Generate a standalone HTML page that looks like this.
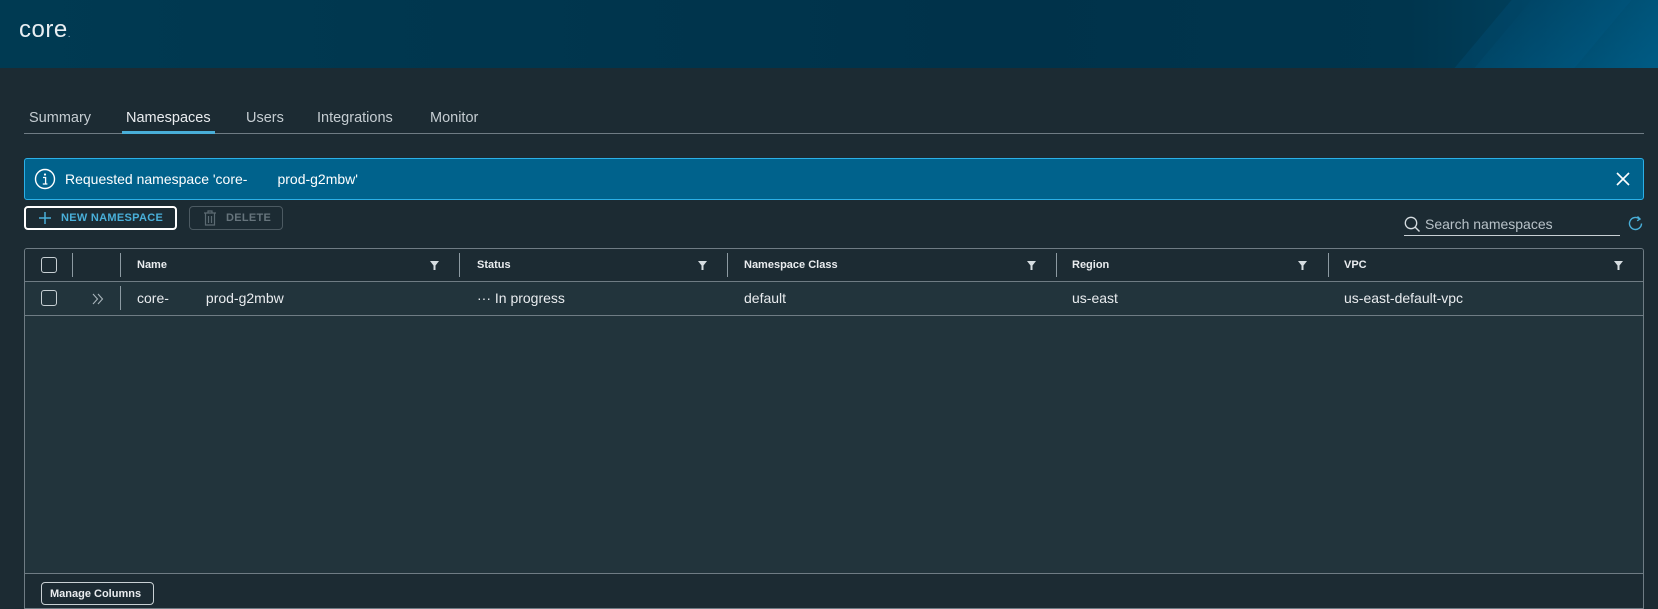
<!DOCTYPE html>
<html><head><meta charset="utf-8"><style>
*{box-sizing:border-box;margin:0;padding:0}
body{width:1658px;height:609px;overflow:hidden;background:#1c2b33;font-family:"Liberation Sans",sans-serif;color:#e9ecef;position:relative}
.hdr{position:absolute;left:0;top:0;width:1658px;height:68px;background:linear-gradient(90deg,#003a52 0%,#00324a 60%,#00354d 85%,#004a6b 100%);overflow:hidden}
.hdr .s1{position:absolute;right:-40px;top:-20px;width:200px;height:120px;background:linear-gradient(120deg,rgba(0,100,150,.0),rgba(0,110,160,.55));transform:skewX(-40deg)}
.hdr .s2{position:absolute;right:60px;top:-20px;width:120px;height:120px;background:rgba(0,80,120,.35);transform:skewX(-40deg)}
.logo{position:absolute;left:19px;top:16px;font-size:24px;color:#e8eef2;letter-spacing:.5px}
.logo span{font-size:10px;color:#8fb0c0}
.a{position:absolute}
.tab{position:absolute;top:110px;font-size:14.5px;color:#c5cdd2}
.t{font-size:14px}
.hd{position:absolute;top:259px;font-size:11px;font-weight:bold;color:#e9ecef}
.sep{position:absolute;top:253px;width:1px;height:24px;background:#8c9aa2}
.flt{position:absolute;top:261px}
.cb{position:absolute;width:16px;height:16px;border:1px solid #c8d0d4;border-radius:3px}
.cell{position:absolute;top:290px;font-size:14px;color:#e9ecef}
</style></head><body>
<div class="hdr"><div class="s2"></div><div class="s1"></div></div>
<div class="logo">core<span>.</span></div>

<div class="tab" style="left:29px">Summary</div>
<div class="tab" style="left:126px;color:#e9ecef">Namespaces</div>
<div class="tab" style="left:246px">Users</div>
<div class="tab" style="left:317px">Integrations</div>
<div class="tab" style="left:430px">Monitor</div>
<div class="a" style="left:24px;top:133px;width:1620px;height:1px;background:#6f7c84"></div>
<div class="a" style="left:122px;top:131px;width:93px;height:3px;background:#49afd9"></div>

<div class="a" style="left:24px;top:158px;width:1620px;height:42px;background:#00628c;border:1px solid #2bb0e8;border-radius:3px"></div>
<svg class="a" style="left:34px;top:168px" width="22" height="22" viewBox="0 0 22 22"><circle cx="11" cy="11" r="9.5" fill="none" stroke="#fff" stroke-width="1.4"/><circle cx="11" cy="6.5" r="1.1" fill="#fff"/><path d="M9 9.5h2.6v6.5M8.8 16h4.6" fill="none" stroke="#fff" stroke-width="1.3"/></svg>
<div class="a t" style="left:65px;top:171px;color:#fff">Requested namespace 'core-<span style="display:inline-block;width:30px"></span>prod-g2mbw'</div>
<svg class="a" style="left:1616px;top:172px" width="14" height="14" viewBox="0 0 14 14"><path d="M1 1L13 13M13 1L1 13" stroke="#fff" stroke-width="1.6"/></svg>

<div class="a" style="left:24px;top:206px;width:153px;height:24px;border:2px solid #fff;border-radius:4px;background:#1c2b33"></div>
<svg class="a" style="left:38px;top:211px" width="14" height="14"><path d="M7 1v12M1 7h12" stroke="#49afd9" stroke-width="1.5"/></svg>
<div class="a" style="left:61px;top:212px;font-size:11px;font-weight:bold;color:#49afd9;letter-spacing:.3px">NEW NAMESPACE</div>
<div class="a" style="left:189px;top:206px;width:94px;height:24px;border:1px solid #4c5a62;border-radius:4px"></div>
<svg class="a" style="left:203px;top:210px" width="14" height="16" viewBox="0 0 14 16"><path d="M1 3h12M5 3V1h4v2M2.5 3v12h9V3M5.5 6v7M8.5 6v7" fill="none" stroke="#5b6a72" stroke-width="1.2"/></svg>
<div class="a" style="left:226px;top:212px;font-size:11px;font-weight:bold;color:#66747c;letter-spacing:.3px">DELETE</div>

<svg class="a" style="left:1404px;top:216px" width="17" height="17" viewBox="0 0 17 17"><circle cx="7" cy="7" r="5.7" fill="none" stroke="#d6dde1" stroke-width="1.3"/><path d="M11 11l4.5 4.5" stroke="#d6dde1" stroke-width="1.4"/></svg>
<div class="a t" style="left:1425px;top:216px;color:#b8c2c8">Search namespaces</div>
<div class="a" style="left:1404px;top:235px;width:216px;height:1px;background:#c8d0d4"></div>
<svg class="a" style="left:1627px;top:215px" width="17" height="17" viewBox="0 0 17 17"><path d="M14.5 8.5A6 6 0 1 1 12.5 4" fill="none" stroke="#49afd9" stroke-width="1.4"/><path d="M10.5 1.5l2.5 2.5-2.8 1.8" fill="none" stroke="#49afd9" stroke-width="1.4"/></svg>

<div class="a" style="left:24px;top:248px;width:1620px;height:361px;border:1px solid #6f7c84;border-radius:3px 3px 0 0;background:#22343c;overflow:hidden">
 <div class="a" style="left:0;top:0;width:1620px;height:33px;background:#1c2b33;border-bottom:1px solid #6f7c84"></div>
 <div class="a" style="left:0;top:66px;width:1620px;height:1px;background:#6f7c84"></div>
 <div class="a" style="left:0;top:324px;width:1620px;height:40px;background:#1c2b33;border-top:1px solid #6f7c84"></div>
</div>
<div class="cb" style="left:41px;top:257px"></div>
<div class="sep" style="left:72px"></div><div class="sep" style="left:120px"></div>
<div class="sep" style="left:459px"></div><div class="sep" style="left:727px"></div><div class="sep" style="left:1056px"></div><div class="sep" style="left:1328px"></div>
<div class="hd" style="left:137px">Name</div>
<div class="hd" style="left:477px">Status</div>
<div class="hd" style="left:744px">Namespace Class</div>
<div class="hd" style="left:1072px">Region</div>
<div class="hd" style="left:1344px">VPC</div>
<svg class="flt" style="left:430px" width="9" height="9"><path d="M0 0h9L5.5 4.5V9h-2V4.5z" fill="#d6dde1"/></svg>
<svg class="flt" style="left:698px" width="9" height="9"><path d="M0 0h9L5.5 4.5V9h-2V4.5z" fill="#d6dde1"/></svg>
<svg class="flt" style="left:1027px" width="9" height="9"><path d="M0 0h9L5.5 4.5V9h-2V4.5z" fill="#d6dde1"/></svg>
<svg class="flt" style="left:1298px" width="9" height="9"><path d="M0 0h9L5.5 4.5V9h-2V4.5z" fill="#d6dde1"/></svg>
<svg class="flt" style="left:1614px" width="9" height="9"><path d="M0 0h9L5.5 4.5V9h-2V4.5z" fill="#d6dde1"/></svg>

<div class="cb" style="left:41px;top:290px"></div>
<svg class="a" style="left:92px;top:293px" width="12" height="12"><path d="M1 1l4.5 5L1 11M6 1l4.5 5L6 11" fill="none" stroke="#a8b4ba" stroke-width="1.1"/></svg>
<div class="sep" style="left:120px;top:286px"></div>
<div class="cell" style="left:137px">core-<span style="display:inline-block;width:37px"></span>prod-g2mbw</div>
<div class="cell" style="left:477px">··· In progress</div>
<div class="cell" style="left:744px">default</div>
<div class="cell" style="left:1072px">us-east</div>
<div class="cell" style="left:1344px">us-east-default-vpc</div>

<div class="a" style="left:41px;top:582px;width:113px;height:23px;border:1px solid #c8d0d4;border-radius:4px"></div>
<div class="a" style="left:50px;top:588px;font-size:11px;font-weight:bold;color:#e9ecef">Manage Columns</div>
</body></html>
